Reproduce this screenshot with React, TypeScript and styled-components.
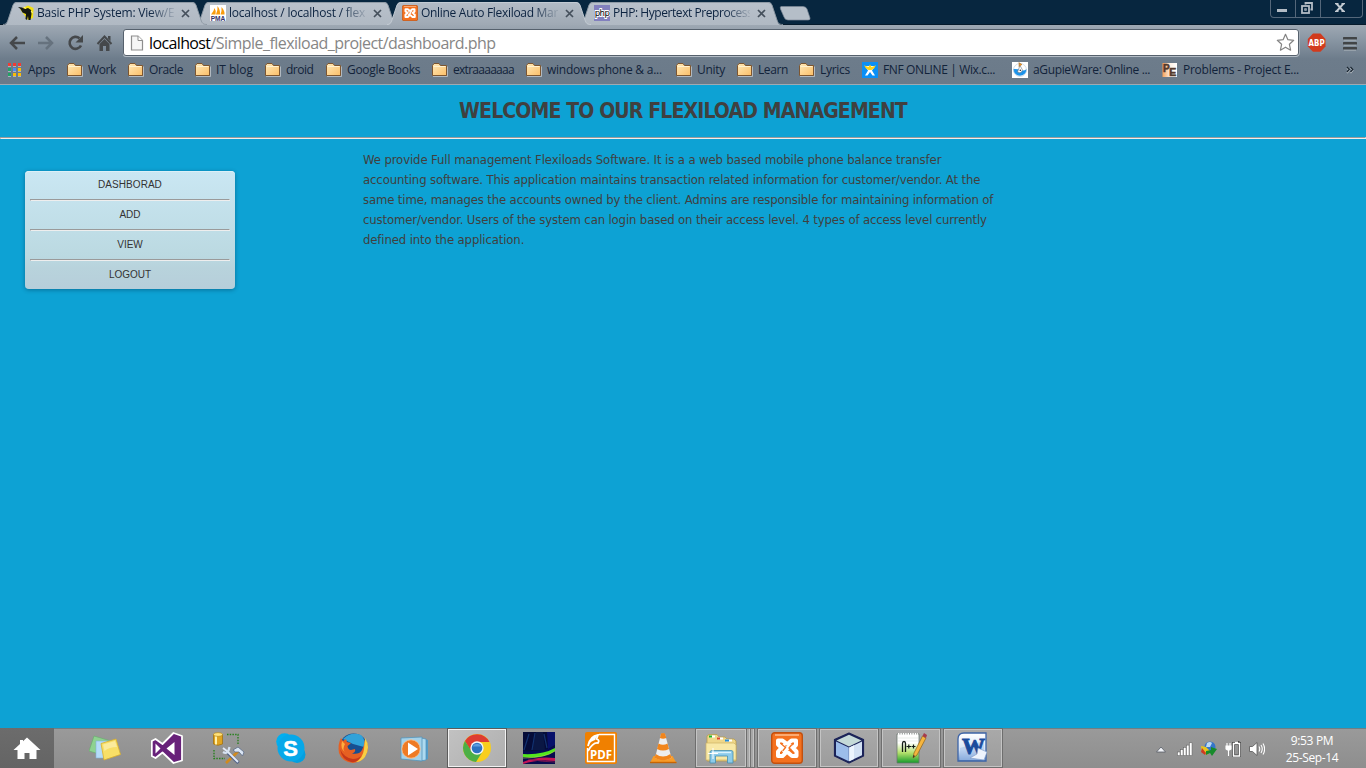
import React from 'react';
import styled, { createGlobalStyle, css } from 'styled-components';

const GlobalStyle = createGlobalStyle`
  * { box-sizing: border-box; }
  html, body { margin: 0; padding: 0; }
  body { overflow: hidden; background: #0da2d4; }
`;

const uiFont = '"Open Sans", "Noto Sans", sans-serif';
const pageFont = '"DejaVu Sans Condensed", "DejaVu Sans", sans-serif';

const Screen = styled.div`
  width: 1366px;
  height: 768px;
  display: flex;
  flex-direction: column;
  overflow: hidden;
  font-family: ${uiFont};
  font-size: 12px;
`;

/* ---------- tab strip ---------- */

const TabStrip = styled.header`
  flex: 0 0 25px;
  display: flex;
  align-items: flex-end;
  padding-left: 3px;
  background: #07263f;
  box-shadow: inset 0 -1px 0 #051a2b;
`;

const TabItem = styled.div<{ $layer: number }>`
  position: relative;
  z-index: ${(p) => p.$layer};
  flex: 0 0 204px;
  height: 24px;
  margin-right: -12px;
  display: flex;
  align-items: center;
  padding: 0 15px;
`;

const TabShape = styled.svg`
  position: absolute;
  left: 0;
  top: 0;
  z-index: -1;
  width: 204px;
  height: 24px;
`;

const Favicon = styled.svg`
  flex: 0 0 16px;
  width: 16px;
  height: 16px;
  display: block;
`;

const TabTitle = styled.span<{ $track: number }>`
  flex: 0 0 137px;
  margin-left: 3px;
  overflow: hidden;
  white-space: nowrap;
  line-height: 16px;
  color: #0c2340;
  letter-spacing: ${(p) => p.$track}px;
  mask-image: linear-gradient(to right, #000 112px, transparent 140px);
`;

const CloseGlyph = styled.svg`
  flex: 0 0 9px;
  width: 9px;
  height: 9px;
  margin-left: 7px;
`;

const NewTab = styled.svg`
  flex: 0 0 32px;
  height: 16px;
  margin: 0 0 4px 8px;
`;

const WindowControls = styled.div`
  display: flex;
  align-self: flex-start;
  margin: 0 3px 0 auto;
  height: 18px;
  border: 1px solid #54677a;
  border-top: 0;
  border-radius: 0 0 4px 4px;
`;

const WindowButton = styled.div<{ $w: number }>`
  width: ${(p) => p.$w}px;
  display: flex;
  justify-content: center;
  align-items: center;
  padding: 0 3px 2px 0;
  & + & { border-left: 1px solid #54677a; }
`;

/* ---------- toolbar ---------- */

const Chrome = styled.div`
  flex: 0 0 60px;
  background: linear-gradient(#9ea8b3 0, #8a97a4 14px, #6d7c8b 34px, #6b7a89 100%);
  border-bottom: 1px solid #a0a9b1;
`;

const Toolbar = styled.div`
  height: 35px;
  display: flex;
  align-items: center;
  padding: 0 8px;
`;

const NavIcon = styled.svg`
  flex: 0 0 18px;
  width: 18px;
  height: 18px;
  margin-right: 11px;
`;

const Omnibox = styled.div`
  flex: 0 0 1176px;
  height: 27px;
  margin-left: -1px;
  display: flex;
  align-items: center;
  padding: 0 3px 0 6px;
  background: #fff;
  border: 1px solid #56616d;
  border-radius: 3px;
  box-shadow: 0 1px 0 #b4bdc6, 1px 0 0 #a4aeb8;
  font-size: 16px;
`;

const UrlText = styled.span`
  margin-left: 5px;
  line-height: 22px;
  white-space: nowrap;
  color: #868686;
  letter-spacing: -0.54px;
`;

const UrlHost = styled.span`
  color: #000;
  letter-spacing: -0.62px;
`;

const StarIcon = styled.svg`
  width: 19px;
  height: 19px;
  margin-left: auto;
`;

const AbpIcon = styled.svg`
  width: 20px;
  height: 20px;
  margin-left: 8px;
`;

const MenuIcon = styled.svg`
  width: 14px;
  height: 16px;
  margin-left: 16px;
`;

const BookmarkBar = styled.nav`
  height: 24px;
  margin-top: -2px;
  display: flex;
  align-items: center;
  padding: 0 12px 0 7px;
  color: #12233a;
`;

const Bookmark = styled.a<{ $w: number; $track: number }>`
  flex: 0 0 ${(p) => p.$w}px;
  display: flex;
  align-items: center;
  gap: 5px;
  line-height: 16px;
  white-space: nowrap;
  letter-spacing: ${(p) => p.$track}px;
`;

const Overflow = styled.svg`
  width: 8px;
  height: 8px;
  margin-left: auto;
`;

/* ---------- web page ---------- */

const Page = styled.main`
  flex: 1 1 auto;
  background: #0da2d4;
  color: #404040;
  font-family: ${pageFont};
`;

const Heading = styled.h1`
  margin: 0;
  height: 52px;
  line-height: 53px;
  text-align: center;
  font-size: 21px;
  font-weight: bold;
  letter-spacing: -0.86px;
`;

const ruleStyle = css`
  height: 2px;
  margin: 0;
  border: 1px solid;
  border-color: #9a9a9a #eee #eee #9a9a9a;
`;

const Rule = styled.hr`${ruleStyle}`;

const Columns = styled.div`
  display: flex;
  align-items: flex-start;
  padding-left: 25px;
`;

const SideMenu = styled.ul`
  flex: 0 0 210px;
  margin: 32px 128px 0 0;
  padding: 0 5px;
  list-style: none;
  border-radius: 4px;
  background: linear-gradient(#cae7f3 0, #bbd9e1 72%, #b8d3dc 82%, #b6ceda 100%);
  box-shadow: 0 1px 4px rgba(0, 50, 80, 0.45), inset 0 1px 0 #dcf0f7;
`;

const SideItem = styled.li<{ $track?: number }>`
  height: 28px;
  line-height: 27px;
  text-align: center;
  font-family: "Liberation Sans", Arial, sans-serif;
  font-size: 10px;
  color: #333;
  letter-spacing: ${(p) => p.$track ?? 0}px;
`;

const SideRule = styled.hr`${ruleStyle}`;

const Intro = styled.p`
  margin: 11px 0 0;
  font-size: 13px;
  line-height: 20px;
`;

const IntroLine = styled.span<{ $track: number }>`
  display: block;
  white-space: nowrap;
  letter-spacing: ${(p) => p.$track}px;
`;

/* ---------- taskbar ---------- */

const Taskbar = styled.footer`
  flex: 0 0 40px;
  display: flex;
  background: linear-gradient(#9a9a9a, #8e8e8e);
  box-shadow: inset 0 1px 0 #6f7f85;
`;

const StartButton = styled.div`
  flex: 0 0 54px;
  margin-right: 21px;
  display: flex;
  align-items: center;
  justify-content: center;
  background: linear-gradient(#6c6c6c, #646464);
`;

const TaskButton = styled.div<{ $state?: 'open' | 'active' | 'stack' }>`
  flex: 0 0 60px;
  height: 40px;
  margin-right: 2px;
  display: flex;
  align-items: center;
  justify-content: center;
  ${(p) => p.$state && css`
    border: 1px solid #6e6e6e;
    box-shadow: inset 0 0 0 1px #c4c4c4;
    background: linear-gradient(#a9a9a9, #9c9c9c);
  `}
  ${(p) => p.$state === 'active' && css`
    border-color: #5c5c5c;
    box-shadow: inset 0 0 0 1px #f2f2f2;
    background: linear-gradient(135deg, #c2c2c2, #aeaeae);
  `}
  ${(p) => p.$state === 'stack' && css`
    flex-basis: 52px;
    margin-right: 0;
  `}
`;

const StackEdge = styled.div`
  flex: 0 0 4px;
  height: 40px;
  border: 1px solid #727272;
  border-left: 0;
  background: #a8a8a8;
  box-shadow: inset -1px 0 0 #c4c4c4;
`;

const Stack = styled.div`
  flex: 0 0 60px;
  margin-right: 2px;
  display: flex;
`;

const TaskIcon = styled.svg`
  flex: 0 0 32px;
  width: 32px;
  height: 32px;
  display: block;
`;

const Tray = styled.div`
  margin-left: auto;
  display: flex;
  align-items: center;
  gap: 8px;
  padding-top: 1px;
`;

const TrayIcon = styled.svg`
  width: 16px;
  height: 16px;
`;

const Clock = styled.div`
  width: 60px;
  margin: 0 24px 0 9px;
  text-align: center;
  line-height: 17px;
  color: #fff;
  letter-spacing: -0.35px;
`;

/* ---------- small drawings ---------- */

const Folder = () => (
  <Favicon viewBox="0 0 16 16">
    <path d="M.5 13.5V3.5L2 1.5h5l1.5 2h6v10z" fill="url(#folderFill)" stroke="#7d5630" />
    <path d="M1.500 4.500h12" stroke="#fff1cf" />
    <path d="M1 14.500h14.500v-10" fill="none" stroke="#c3c9ce" strokeWidth=".8" />
  </Favicon>
);

const XamppArt = () => (
  <>
    <rect x=".7" y=".7" width="30.600" height="30.600" rx="3" fill="#f4711f" stroke="#c2500f" strokeWidth="1.400" />
    <path d="M4 3h24" stroke="#ffc9a0" strokeWidth="1.300" />
    <path
      d="M12.500 13.800L10.500 15.800L7 12.500V8.500H11.500L15.500 11.500H17L20.500 8.500H25V13L22 16L25.500 19.500V24H21L17 20.500H15L11.500 24H7V19.500L10.500 15.800M13 18.500L19.500 14"
      fill="none" stroke="#fff" strokeWidth="4" strokeLinejoin="round" strokeLinecap="round"
    />
    <path d="M11 12.500L14.500 15.500L12 18.500M20.500 13L18 16L20.500 19" fill="none" stroke="#f4711f" strokeWidth="1.300" strokeLinecap="round" />
  </>
);

const BirdIcon = () => (
  <Favicon viewBox="0 0 16 16">
    <path d="M2 4L10 .5L15.500 3L15 13L10 15Z" fill="#f2e112" />
    <path d="M0 2L4 2.500L7 4L10 3L13 5L13.500 9L12.500 15H10.500L10 11L9 15L7.500 14L8 9L4.500 7.500L2.500 4Z" fill="#141811" />
    <path d="M6 2l2 1.500M13 6l1.500 2" stroke="#fff58a" />
  </Favicon>
);

const PmaIcon = () => (
  <Favicon viewBox="0 0 16 16">
    <rect width="16" height="16" fill="#fff" />
    <path d="M1 9.500Q4 6 4.500 3Q6.500 6 5.500 9.500ZM6 9.500Q8 5 7.500 1Q10.500 5 10 9.500ZM10.500 9.500Q12 6 11.500 2Q15 6 14.500 9.500Z" fill="#f89c0e" />
    <text x="8" y="15.600" textAnchor="middle" fontFamily="Liberation Sans" fontWeight="bold" fontSize="6.600" fill="#34336b">PMA</text>
  </Favicon>
);

const PhpIcon = () => (
  <Favicon viewBox="0 0 16 16">
    <rect width="16" height="16" fill="#8280be" />
    <text x="8" y="10.700" textAnchor="middle" fontFamily="DejaVu Sans Condensed" fontSize="9.500" letterSpacing="-.6" fill="#000" stroke="#fff" strokeWidth="1.800" paintOrder="stroke">php</text>
  </Favicon>
);

const XamppIcon = () => <Favicon viewBox="0 0 32 32"><XamppArt /></Favicon>;

const AppsIcon = () => (
  <Favicon viewBox="0 0 16 16">
    {['#f23b33', '#f23b33', '#f23b33', '#20a464', '#4a8cf6', '#fbbc05', '#20a464', '#fbbc05', '#fbbc05'].map((c, i) => (
      <rect key={i} x={1 + (i % 3) * 5} y={1 + Math.floor(i / 3) * 5} width="3" height="3" fill={c} />
    ))}
    <path d="M1 4.500H14M1 9.500H14M1 14.500H14" stroke="#b9c1c9" strokeWidth=".8" strokeDasharray="3 2" />
  </Favicon>
);

const WixIcon = () => (
  <Favicon viewBox="0 0 16 16">
    <rect width="16" height="16" fill="#0a8ff5" />
    <path d="M3 13.500H5.500L8 10L10.500 13.500H13L10 8.500L13 4H3L6 8.500Z" fill="#fff" />
    <path d="M2 3.200L5 4.500L6.500 5L8 2.500L9.500 5L11 4.500L14 3.200L12 6.500L9.500 8H6.500L4 6.500Z" fill="#ffd31a" />
  </Favicon>
);

const GupieIcon = () => (
  <Favicon viewBox="0 0 16 16">
    <rect width="16" height="16" fill="#fff" />
    <path d="M1.300 7A6.700 6.700 0 0 0 14.700 7Q11.500 9.500 8 8Q4 6.500 1.300 7Z" fill="#1c93ea" />
    <circle cx="8" cy="8" r="6.500" fill="none" stroke="#b4c6d6" strokeWidth=".6" />
    <path d="M8 3.500L5.500 10Q9.500 12 10.500 8Z" fill="#fff" stroke="#65717c" strokeWidth=".6" />
    <path d="M7 0v5M7.500 1l2.500 1.500l-2.500 1.500z" fill="#f59a23" stroke="#a66516" strokeWidth=".5" />
    <circle cx="8.300" cy="8.200" r=".8" fill="#222" />
  </Favicon>
);

const PeIcon = () => (
  <Favicon viewBox="0 0 16 16">
    <rect x=".5" y="1" width="14.500" height="14" fill="url(#peFill)" />
    <text x="1" y="10" fontFamily="Liberation Sans" fontWeight="bold" fontSize="10" fill="#543a2c" stroke="#543a2c" strokeWidth=".6">P</text>
    <text x="7.300" y="13.800" fontFamily="Liberation Sans" fontWeight="bold" fontSize="10.500" fill="#543a2c" stroke="#543a2c" strokeWidth=".6">E</text>
  </Favicon>
);

const SharedGradients = () => (
  <>
    <linearGradient id="folderFill" x1="0" y1="0" x2="1" y2="1">
      <stop offset="0" stopColor="#ffe9b8" /><stop offset="1" stopColor="#fbbf68" />
    </linearGradient>
    <linearGradient id="peFill">
      <stop offset="0" stopColor="#f5a25a" /><stop offset=".55" stopColor="#fdf1e6" /><stop offset="1" stopColor="#fff" />
    </linearGradient>
    <linearGradient id="tabIdle" x1="0" y1="0" x2="0" y2="1">
      <stop offset="0" stopColor="#b9c1cb" /><stop offset="1" stopColor="#b0b9c3" />
    </linearGradient>
    <linearGradient id="tabActive" x1="0" y1="0" x2="0" y2="1">
      <stop offset="0" stopColor="#b3bcc6" /><stop offset="1" stopColor="#9fa9b4" />
    </linearGradient>
  </>
);

type TabData = { title: string; track: number; icon: React.ReactNode; active?: boolean };

const tabs: TabData[] = [
  { title: 'Basic PHP System: View/E', track: -0.21, icon: <BirdIcon /> },
  { title: 'localhost / localhost / flex', track: -0.21, icon: <PmaIcon /> },
  { title: 'Online Auto Flexiload Mar', track: -0.3, icon: <XamppIcon />, active: true },
  { title: 'PHP: Hypertext Preprocess', track: -0.44, icon: <PhpIcon /> },
];

const Tab = ({ tab, layer }: { tab: TabData; layer: number }) => (
  <TabItem $layer={layer}>
    <TabShape viewBox="0 0 204 24">
      {layer === 4 && <defs><SharedGradients /></defs>}
      <path
        d="M0 24C3 24 4 22 5 19L10 4Q11 1 14 1H189Q192 1 193 4L198 19C199 22 200 24 204 24Z"
        fill={tab.active ? 'url(#tabActive)' : 'url(#tabIdle)'}
      />
      <path
        d="M0 23.500C3 23.500 4 22 5 19L10 4Q11 1.500 14 1.500H189Q192 1.500 193 4L198 19C199 22 200 23.500 204 23.500"
        fill="none" stroke={tab.active ? '#c5cdd5' : '#8b96a2'} strokeWidth=".9"
      />
    </TabShape>
    {tab.icon}
    <TabTitle $track={tab.track}>{tab.title}</TabTitle>
    <CloseGlyph viewBox="0 0 9 9"><path d="M1 1L8 8M8 1L1 8" stroke="#45505c" strokeWidth="1.700" /></CloseGlyph>
  </TabItem>
);

const bookmarks: [string, number, number, React.ReactNode?][] = [
  ['Apps', 60, -0.25, <AppsIcon />],
  ['Work', 61, -0.38],
  ['Oracle', 67, -0.4],
  ['IT blog', 70, -0.03],
  ['droid', 61, -0.5],
  ['Google Books', 106, -0.31],
  ['extraaaaaaa', 94, -0.72],
  ['windows phone & a...', 150, -0.23],
  ['Unity', 61, -0.3],
  ['Learn', 62, -0.4],
  ['Lyrics', 63, -0.3],
  ['FNF ONLINE | Wix.c...', 150, -0.37, <WixIcon />],
  ['aGupieWare: Online ...', 150, -0.36, <GupieIcon />],
  ['Problems - Project E...', 150, -0.25, <PeIcon />],
];

const menu: [string, number][] = [['DASHBORAD', 0.05], ['ADD', 0], ['VIEW', 0], ['LOGOUT', 0]];

const intro: [string, number][] = [
  ['We provide Full management Flexiloads Software. It is a a web based mobile phone balance transfer', -0.11],
  ['accounting software. This application maintains transaction related information for customer/vendor. At the', -0.123],
  ['same time, manages the accounts owned by the client. Admins are responsible for maintaining information of', -0.143],
  ['customer/vendor. Users of the system can login based on their access level. 4 types of access level currently', -0.14],
  ['defined into the application.', -0.13],
];

/* ---------- taskbar drawings ---------- */

const StickyNotes = () => (
  <TaskIcon viewBox="0 0 32 32">
    <path d="M5 4L22 9L17 24L0 19Z" fill="#8ed290" stroke="#67ad6b" strokeWidth=".6" />
    <path d="M7 9H21V26H7Z" fill="#b5dcf8" stroke="#83b3d8" strokeWidth=".6" />
    <path d="M12 11.500L27 7L31.500 22.500L15 28Z" fill="#f8df67" stroke="#d9ae2b" strokeWidth=".8" />
    <path d="M14 12.500L26 9L28 15Q20 15 15.500 19Z" fill="#fbeb9c" />
  </TaskIcon>
);

const VisualStudio = () => (
  <TaskIcon viewBox="0 0 32 32">
    <path d="M22.500 1L31 4V28.500L22.500 31L11.500 20.500L4.500 26L.8 24V9L4.500 7L11.500 12L22.500 1Z" fill="#68217a" stroke="#fff" strokeWidth="1.800" strokeLinejoin="round" />
    <path d="M4.500 11.500V21.500L9.500 16.500ZM23.500 10L15.500 16.500L23.500 23Z" fill="#fff" />
  </TaskIcon>
);

const SqlTools = () => (
  <TaskIcon viewBox="0 0 32 32">
    <path d="M.5 2.500V12Q5 14.500 9.500 12V2.500Z" fill="#e0a420" stroke="#9d6b08" strokeWidth=".7" />
    <path d="M3 3V12.500" stroke="#fff0a8" strokeWidth="2" />
    <ellipse cx="5" cy="2.500" rx="4.500" ry="1.900" fill="#ffe27a" stroke="#ab7a11" strokeWidth=".6" />
    <path d="M14 2.500H25V13M1 18V26.500H12" fill="none" stroke="#28811f" strokeWidth="1.400" strokeDasharray="1.500 1.200" />
    <path d="M13 31L26 18.500" stroke="#d28a1c" strokeWidth="2.600" />
    <path d="M20 18L25 15L31 20L29.500 24L26 20L22.500 20Z" fill="#dbe6f4" stroke="#5d6c88" strokeWidth=".8" />
    <path d="M13 19L25.500 31" stroke="#55658b" strokeWidth="3.200" />
    <path d="M10 16L14.500 19.500M14 19L25 30" stroke="#e3ebf8" strokeWidth="1.800" />
    <path d="M10 20Q15 23 16.500 15" fill="none" stroke="#d7e2f2" strokeWidth="2.300" />
  </TaskIcon>
);

const Skype = () => (
  <TaskIcon viewBox="0 0 32 32">
    <circle cx="9.500" cy="9.500" r="8.300" fill="#00aff0" />
    <circle cx="22" cy="22.500" r="8.500" fill="#049fdf" />
    <circle cx="16" cy="16" r="13.500" fill="#06a8e9" />
    <text x="15.500" y="24" textAnchor="middle" fontFamily="Liberation Sans" fontWeight="bold" fontSize="22" fill="#fff" stroke="#fff" strokeWidth=".5">S</text>
  </TaskIcon>
);

const Firefox = () => (
  <TaskIcon viewBox="0 0 32 32">
    <circle cx="16.500" cy="15.500" r="14" fill="#174f91" />
    <path d="M6 7Q14 -1 24 3Q29 8 27 15L16 12Z" fill="#31a2d9" />
    <path d="M28 8Q32 13 30.500 19Q27 30 16 31Q5 30 2 21Q.5 12 4 6L6 9L9 7L10 10L14 11Q12 13 10.500 14Q11 18 14 18L18 17Q19 20 15 21.500Q22 23 25 18Q27 14 28 8Z" fill="#e66022" />
    <path d="M28 6Q34 15 28 25Q24 30 19 30Q26 26 27 17Z" fill="#f8cf43" />
    <path d="M3 17Q7 26 16 27Q21 27 24 24Q21 31 14 30Q5 28 3 17Z" fill="#c63819" />
    <path d="M5 9L8 12Q5 17 8 20Q3 17 5 9Z" fill="#ffad3e" />
  </TaskIcon>
);

const MediaPlayer = () => (
  <TaskIcon viewBox="0 0 32 32">
    <path d="M25 7L29 8V27L24 29Z" fill="#549cc8" />
    <path d="M22 6L27 7V28L21 29Z" fill="#aedaf0" stroke="#4d91bb" strokeWidth=".7" />
    <path d="M2 6L23 5V29L2 27Z" fill="#a3d1e9" stroke="#5795ba" strokeWidth=".8" />
    <circle cx="12" cy="17" r="9.200" fill="#ee7a24" stroke="#ffc28d" strokeWidth=".8" />
    <path d="M9 10.500V23.500L19 17Z" fill="#fff" />
  </TaskIcon>
);

const ChromeLogo = () => (
  <TaskIcon viewBox="0 0 32 32">
    <circle cx="16" cy="16" r="14" fill="#f8ce1d" />
    <path d="M3.900 9A14 14 0 0 1 28.500 10H16L10 19Z" fill="#de3c31" />
    <path d="M3.900 9A14 14 0 0 0 15 30L21.500 19.500L16 22L10.500 19Z" fill="#4caf45" />
    <circle cx="16" cy="16" r="6.700" fill="#f3f5f7" />
    <circle cx="16" cy="16" r="5.300" fill="#2d72c2" />
    <path d="M11.500 14.500A5 5 0 0 1 20.500 14.500Z" fill="#5d9ce0" />
  </TaskIcon>
);

const Wallpaper = () => (
  <TaskIcon viewBox="0 0 32 32">
    <rect width="32" height="32" fill="#050b4f" />
    <path d="M0 0H32V14Q20 20 0 19Z" fill="#050c38" />
    <path d="M20 0L22 18H9L13 0Z" fill="#0a1744" />
    <path d="M24 0H32V13L25 17Z" fill="#07106a" />
    <path d="M6 2L1 18M12 1L9 18M21 2L24 16" stroke="#123270" strokeWidth="1.200" />
    <path d="M0 22Q20 23 32 16V19Q20 27 0 25Z" fill="#53e51e" />
    <path d="M0 26Q22 26 32 19" fill="none" stroke="#c9e84b" strokeWidth=".6" />
    <path d="M0 30Q14 24 32 26V29Q14 27 0 32Z" fill="#c41556" />
    <path d="M5 27Q20 30 32 30" fill="none" stroke="#6e1650" />
  </TaskIcon>
);

const PdfReader = () => (
  <TaskIcon viewBox="0 0 32 32">
    <rect width="32" height="32" rx="2" fill="#f08000" />
    <path d="M14 2.500H29.500V29.500H2.500V16" fill="none" stroke="#fff" strokeWidth="1.400" />
    <path d="M3 14Q5 4 13 3L11.500 7Q15 8 13 11Q8 10 3 19" fill="none" stroke="#fff" strokeWidth="1.800" />
    <path d="M3 13Q6 5 12 3L10 8Q6 9 3 13Z" fill="#fff" />
    <text x="16" y="27" textAnchor="middle" fontFamily="Open Sans" fontWeight="bold" fontSize="11.500" fill="#fff">PDF</text>
  </TaskIcon>
);

const Vlc = () => (
  <TaskIcon viewBox="0 0 32 32">
    <path d="M6.500 24H25.500L29.500 31H3Z" fill="#f89c28" />
    <path d="M3 30.500H29.500" stroke="#c76403" strokeWidth="1.400" />
    <path d="M14 2Q16 1 18 2L24.500 26Q16 30 8 26Z" fill="#ededee" />
    <path d="M14 1.500Q16 .5 18 1.500L19.300 6Q16 7.500 12.900 6ZM11.500 11.500Q16 14 20.500 11.500L22 17Q16 20 10 17ZM8.700 22Q16 27 23.400 22L24.500 26Q16 30.500 7.700 26Z" fill="#f1851c" />
  </TaskIcon>
);

const Explorer = () => (
  <TaskIcon viewBox="0 0 32 32">
    <path d="M2 29V4L4 2.500H12L14 5H20L22 7H29L31 9V29Z" fill="#efd789" stroke="#b79c4e" strokeWidth=".8" />
    <path d="M5 4.500h5M13 6.500h5M21 8.500h6" stroke="#fff" strokeWidth="2" />
    <path d="M4 4.500h3" stroke="#1bb526" strokeWidth="2" />
    <path d="M12 6.500h3" stroke="#e1452b" strokeWidth="2" />
    <path d="M20 8.500h4" stroke="#258bd8" strokeWidth="2" />
    <path d="M1 11H29L31 13V28H1Z" fill="#f8e8a6" stroke="#ceb164" strokeWidth=".7" />
    <path d="M5 31V20Q5 18.500 7 18.500H26Q28 18.500 28 20V31H22.500V24H10.500V31Z" fill="#8ccbea" stroke="#458eaf" strokeWidth=".8" />
    <path d="M7 20.500H26" stroke="#dbf3fd" strokeWidth="1.400" />
    <path d="M8 16V27M3 21.500H13" stroke="#fff" strokeWidth="1" />
  </TaskIcon>
);

const Netbeans = () => (
  <TaskIcon viewBox="0 0 32 32">
    <path d="M16 1L30.500 7.500V24L16 31L1.500 24V7.500Z" fill="#1b2358" stroke="#1b2358" strokeWidth="1.200" strokeLinejoin="round" />
    <path d="M16 2.800L28.500 8.500L16 14.500L3.500 8.500Z" fill="#c5dad8" />
    <path d="M3 9.500L15.800 15.500V29.300L3 23.200Z" fill="#9cbdea" />
    <path d="M29 9.500L16.200 15.500V29.300L29 23.200Z" fill="#d2e1f4" />
    <path d="M16.200 15.500L21 13.300V27L16.200 29.300Z" fill="#edf5fe" />
  </TaskIcon>
);

const NotepadPlus = () => (
  <TaskIcon viewBox="0 0 32 32">
    <path d="M2 2H24V31H2Z" fill="url(#nppFill)" stroke="#6b7770" strokeWidth=".8" />
    <path d="M3 2.500H23" stroke="#fff" strokeWidth="3" strokeDasharray="1.400 1" />
    <path d="M3 6H23M3 9H23" stroke="#dfe5df" strokeWidth=".7" />
    <path d="M7.500 20V11.500Q7.500 9.500 9 9.500Q10.500 9.500 10.500 11.500V20" fill="none" stroke="#121a16" strokeWidth="1.300" />
    <path d="M11.500 14.500H16M13.800 12.500V16.500M16.500 14.500H20.500M18.500 12.500V16.500" stroke="#121a16" strokeWidth="1.200" />
    <path d="M18 26L19 21L27.500 4L31 6L22 23Z" fill="#f5b53e" stroke="#8f6218" strokeWidth=".7" />
    <path d="M27.500 4L29 1L32 3L31 6Z" fill="#a63c4d" />
    <path d="M18 26L18.500 23L20 24Z" fill="#24231f" />
    <defs>
      <linearGradient id="nppFill" x1="0" y1="0" x2="0" y2="1">
        <stop offset=".3" stopColor="#fff" /><stop offset=".65" stopColor="#b3e06b" /><stop offset="1" stopColor="#159a2a" />
      </linearGradient>
    </defs>
  </TaskIcon>
);

const Word = () => (
  <TaskIcon viewBox="0 0 32 32">
    <path d="M7 1H29V29H1V7Q1 1 7 1Z" fill="url(#wordFill)" stroke="#3d64a7" strokeWidth="1.300" />
    <path d="M3 16L27 9V28H3Z" fill="#9fbee7" opacity=".5" />
    <text x="16.500" y="21.500" textAnchor="middle" fontFamily="Liberation Serif" fontWeight="bold" fontSize="23" fill="#1b4b9c" stroke="#1b4b9c" strokeWidth="1">W</text>
    <path d="M21 16L30 20L27 28L13 26L20 22Z" fill="#eef4fd" stroke="#7897c5" strokeWidth=".6" />
    <defs>
      <linearGradient id="wordFill" x1="0" y1="0" x2="0" y2="1">
        <stop offset="0" stopColor="#fff" /><stop offset=".6" stopColor="#d5e3f6" /><stop offset="1" stopColor="#6e96d0" />
      </linearGradient>
    </defs>
  </TaskIcon>
);

export default function App() {
  return (
    <Screen>
      <GlobalStyle />
      <TabStrip>
        {tabs.map((t, i) => <Tab key={t.title} tab={t} layer={t.active ? 5 : 4 - i} />)}
        <NewTab viewBox="0 0 32 16">
          <path d="M2 1.500H24Q27 1.500 28 4L31 13Q31.500 15 29 15H9Q6 15 5 12L1.500 4Q.8 1.500 2 1.500Z" fill="#b5bec8" stroke="#7e8a98" strokeWidth=".7" />
        </NewTab>
        <WindowControls>
          <WindowButton $w={24}>
            <svg width="12" height="8"><rect x="1" y="5" width="10" height="3" fill="#b3bcc5" /></svg>
          </WindowButton>
          <WindowButton $w={25}>
            <svg width="12" height="12" viewBox="0 0 12 12" fill="none" stroke="#b3bcc5" strokeWidth="1.800">
              <path d="M4.500 2.500V1H11V7.500H9.500" /><rect x="1" y="4" width="7" height="7" /><rect x="3.800" y="6.800" width="1.400" height="1.400" strokeWidth="1" />
            </svg>
          </WindowButton>
          <WindowButton $w={42}>
            <svg width="10" height="9" viewBox="0 0 10 9"><path d="M1.500 .5L8.500 8.500M8.500 .5L1.500 8.500" stroke="#c2cad1" strokeWidth="2" /><path d="M0 .7H3.500M6.500 .7H10M0 8.300H3.500M6.500 8.300H10" stroke="#c2cad1" strokeWidth="1.200" /></svg>
          </WindowButton>
        </WindowControls>
      </TabStrip>

      <Chrome>
        <Toolbar>
          <NavIcon viewBox="0 0 18 18"><path d="M17 9H3M9 3L3 9L9 15" fill="none" stroke="#45484b" strokeWidth="2.500" /></NavIcon>
          <NavIcon viewBox="0 0 18 18"><path d="M1 9H15M9 3L15 9L9 15" fill="none" stroke="#66727e" strokeWidth="2.500" /></NavIcon>
          <NavIcon viewBox="0 0 18 18">
            <path d="M15 11.500A6 6 0 1 1 13.500 4.300" fill="none" stroke="#45484b" strokeWidth="2.600" />
            <path d="M17 1V8.500H9.500Z" fill="#45484b" />
          </NavIcon>
          <NavIcon viewBox="0 0 18 18">
            <path d="M2.500 10L9.500 2.500L16.500 10" fill="none" stroke="#45484b" strokeWidth="2" />
            <path d="M4.500 10L9.500 5L14.500 10V17H11V12H8V17H4.500ZM13 2H15.500V7L13 4.500Z" fill="#45484b" />
          </NavIcon>
          <Omnibox>
            <svg width="14" height="16" viewBox="0 0 14 16">
              <path d="M1.500 1H8L12.500 5.500V15H1.500Z" fill="#f6f6f6" stroke="#8e8e8e" strokeWidth="1.200" />
              <path d="M8 1V5.500H12.500" fill="#fff" stroke="#8e8e8e" />
            </svg>
            <UrlText><UrlHost>localhost</UrlHost>/Simple_flexiload_project/dashboard.php</UrlText>
            <StarIcon viewBox="0 0 19 19">
              <path d="M9.500 1.300L11.900 6.700L17.700 7.300L13.400 11.300L14.600 17.200L9.500 14.200L4.400 17.200L5.600 11.300L1.300 7.300L7.100 6.700Z" fill="#fff" stroke="#838383" strokeWidth="1.200" strokeLinejoin="round" />
            </StarIcon>
          </Omnibox>
          <AbpIcon viewBox="0 0 20 20">
            <path d="M6 .5H13.500L18.500 6V13.500L13.500 18.800H6L.8 13.500V6Z" fill="#d23a1d" />
            <text x="9.600" y="13.200" textAnchor="middle" fontFamily="DejaVu Sans Condensed" fontWeight="bold" fontSize="9.500" textLength="16" lengthAdjust="spacingAndGlyphs" fill="#fff">ABP</text>
          </AbpIcon>
          <MenuIcon viewBox="0 0 14 16">
            <path d="M1 3.300H13M1 8.300H13M1 13.300H13" stroke="#414446" strokeWidth="2.600" strokeLinecap="round" />
            <path d="M1 5.300H13M1 10.300H13M1 15.300H13" stroke="#a7b0b8" strokeWidth=".8" />
          </MenuIcon>
        </Toolbar>
        <BookmarkBar>
          {bookmarks.map(([label, w, track, icon]) => (
            <Bookmark key={label} $w={w} $track={track}>{icon ?? <Folder />}{label}</Bookmark>
          ))}
          <Overflow viewBox="0 0 8 8">
            <path d="M1 2L3.300 4.500L1 7M4.500 2L6.800 4.500L4.500 7" fill="none" stroke="#c0c7cd" strokeWidth="1.200" />
            <path d="M1 1L3.300 3.500L1 6M4.500 1L6.800 3.500L4.500 6" fill="none" stroke="#1c2833" strokeWidth="1.200" />
          </Overflow>
        </BookmarkBar>
      </Chrome>

      <Page>
        <Heading>WELCOME TO OUR FLEXILOAD MANAGEMENT</Heading>
        <Rule />
        <Columns>
          <SideMenu>
            {menu.map(([label, track], i) => (
              <React.Fragment key={label}>
                {i > 0 && <SideRule />}
                <SideItem $track={track}>{label}</SideItem>
              </React.Fragment>
            ))}
          </SideMenu>
          <Intro>
            {intro.map(([text, track]) => <IntroLine key={text} $track={track}>{text}</IntroLine>)}
          </Intro>
        </Columns>
      </Page>

      <Taskbar>
        <StartButton>
          <svg width="28" height="24" viewBox="0 0 28 24"><path d="M14 1.500L27.500 14H23.500V23H16.500V17H11.500V23H4.500V14H.5L7 8V4H10V5.300Z" fill="#fff" /></svg>
        </StartButton>
        <TaskButton><StickyNotes /></TaskButton>
        <TaskButton><VisualStudio /></TaskButton>
        <TaskButton><SqlTools /></TaskButton>
        <TaskButton><Skype /></TaskButton>
        <TaskButton><Firefox /></TaskButton>
        <TaskButton><MediaPlayer /></TaskButton>
        <TaskButton $state="active"><ChromeLogo /></TaskButton>
        <TaskButton><Wallpaper /></TaskButton>
        <TaskButton><PdfReader /></TaskButton>
        <TaskButton><Vlc /></TaskButton>
        <Stack>
          <TaskButton $state="stack"><Explorer /></TaskButton>
          <StackEdge />
          <StackEdge />
        </Stack>
        <TaskButton $state="open"><TaskIcon viewBox="0 0 32 32"><XamppArt /></TaskIcon></TaskButton>
        <TaskButton $state="open"><Netbeans /></TaskButton>
        <TaskButton $state="open"><NotepadPlus /></TaskButton>
        <TaskButton $state="open"><Word /></TaskButton>
        <Tray>
          <TrayIcon viewBox="0 0 16 16"><path d="M3.500 11L8 6L12.500 11Z" fill="#f4f6fa" stroke="#555c66" strokeWidth=".8" /></TrayIcon>
          <TrayIcon viewBox="0 0 16 16">
            {[0, 1, 2, 3, 4].map((n) => (
              <rect key={n} x={0.5 + n * 3} y={11 - n * 2.3} width="2.500" height={3.500 + n * 2.3} fill="#fff" stroke="#5c5c5c" strokeWidth=".5" />
            ))}
          </TrayIcon>
          <TrayIcon viewBox="0 0 16 16">
            <circle cx="9" cy="6" r="5.500" fill="#3575ca" />
            <path d="M6 2Q9 0 11 2L9 6L5 6Z" fill="#bcd9f2" />
            <path d="M0 5L5 6L9 10L6 14L1 11Z" fill="#e8c51d" />
            <path d="M1 7L5 12L4 14L0 11Z" fill="#cf3a22" />
            <path d="M5 10L10 9V6L16 8L11 15L9 12L5 14Z" fill="#178b2b" />
          </TrayIcon>
          <TrayIcon viewBox="0 0 16 16">
            <path d="M8.500 2.500H14.500V15H8.500ZM10 .8H13V2.500" fill="none" stroke="#444" strokeWidth="3" />
            <path d="M8.500 2.500H14.500V15H8.500ZM10 1.200H13" fill="none" stroke="#fff" strokeWidth="1.500" />
            <path d="M1 5H6V8L4.500 9H2.500L1 8ZM2 5V2M5 5V2M3.500 9V15" fill="#fff" stroke="#fff" strokeWidth="1.100" />
          </TrayIcon>
          <TrayIcon viewBox="0 0 16 16">
            <path d="M.5 5.500H3.500L8 1.500V14.500L3.500 10.500H.5Z" fill="#fff" stroke="#555" strokeWidth=".8" />
            <path d="M10 5.500Q11.500 8 10 10.500M12 4Q14.500 8 12 12M14 2.500Q17.300 8 14 13.500" fill="none" stroke="#fff" strokeWidth="1.100" />
          </TrayIcon>
          <Clock>9:53 PM<br />25-Sep-14</Clock>
        </Tray>
      </Taskbar>
    </Screen>
  );
}
